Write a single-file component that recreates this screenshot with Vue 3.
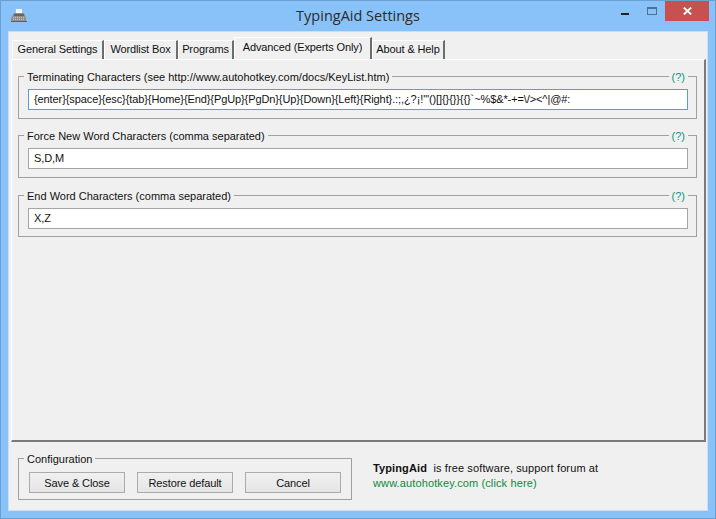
<script setup>
const tabs = [
  { label: 'General Settings', w: 92 },
  { label: 'Wordlist Box', w: 74 },
  { label: 'Programs', w: 56 },
  { label: 'Advanced (Experts Only)', w: 138, active: true },
  { label: 'About & Help', w: 73 },
]
const groups = [
  { title: 'Terminating Characters (see http://www.autohotkey.com/docs/KeyList.htm)', value: '{enter}{space}{esc}{tab}{Home}{End}{PgUp}{PgDn}{Up}{Down}{Left}{Right}.:;,¿?¡!\'"()[]{}{}}{{}`~%$&*-+=\\/><^|@#:', focus: true },
  { title: 'Force New Word Characters (comma separated)', value: 'S,D,M' },
  { title: 'End Word Characters (comma separated)', value: 'X,Z' },
]
</script>

<template>
  <div class="window">
    <header class="titlebar">
      <svg class="appicon" width="16" height="14" viewBox="0 0 16 14">
        <rect x="5" y="0" width="6" height="5" fill="#f4f4f4" />
        <path d="M3 4h10l2 5v4H0V9z" fill="#909090" />
        <rect x="3" y="5" width="10" height="2" fill="#666" />
        <path d="M2 8.5h12M2 10.5h12" stroke="#c4c4c4" stroke-width="1" stroke-dasharray="1 1" />
        <rect x="0" y="12" width="16" height="1" fill="#5f5f5f" />
      </svg>
      <h1 class="title">TypingAid Settings</h1>
      <div class="controls">
        <span class="min"></span>
        <span class="max"></span>
        <span class="close">
          <svg width="9" height="8" viewBox="0 0 9 8"><path d="M.8.5l7.4 7M8.2.5l-7.4 7" stroke="#fff" stroke-width="1.8" /></svg>
        </span>
      </div>
    </header>

    <main class="client">
      <nav class="tabs">
        <div v-for="t in tabs" :key="t.label" class="tab" :class="{ active: t.active }" :style="{ width: t.w + 'px' }">{{ t.label }}</div>
      </nav>
      <section class="panel">
        <div v-for="g in groups" :key="g.title" class="group">
          <span class="legend">{{ g.title }}</span>
          <span class="help">(<b>?</b>)</span>
          <div class="field" :class="{ focus: g.focus }">{{ g.value }}</div>
        </div>
      </section>
      <footer class="footer">
        <div class="config">
          <span class="legend">Configuration</span>
          <div class="buttons">
            <button class="btn">Save &amp; Close</button>
            <button class="btn">Restore default</button>
            <button class="btn">Cancel</button>
          </div>
        </div>
        <div class="about">
          <p><strong>TypingAid</strong>&nbsp; is free software, support forum at</p>
          <p class="link">www.autohotkey.com (click here)</p>
        </div>
      </footer>
    </main>
  </div>
</template>

<style scoped>
.window {
  width: 716px;
  height: 519px;
  box-sizing: border-box;
  background: #88c2f8;
  border: 1px solid #6a9fd0;
  display: flex;
  flex-direction: column;
  font-family: "Liberation Sans", Arial, sans-serif;
  font-size: 11px;
  color: #111;
}
.titlebar {
  height: 29px;
  flex: none;
  display: flex;
  align-items: flex-start;
  position: relative;
  padding-left: 10px;
}
.appicon { margin-top: 8px; }
.title {
  position: absolute;
  left: 0;
  right: 0;
  top: 5px;
  margin: 0;
  text-align: center;
  font-family: "Open Sans", sans-serif;
  font-size: 14.5px;
  font-weight: 400;
  color: #2c2c2c;
}
.controls {
  margin-left: auto;
  margin-right: 6px;
  display: flex;
}
.min {
  width: 8px;
  height: 2px;
  background: #222;
  margin-top: 12px;
  margin-right: 18px;
}
.max {
  width: 10px;
  height: 8px;
  box-sizing: border-box;
  border: 1px solid #4f7194;
  border-top-width: 2px;
  margin-top: 6px;
  margin-right: 8px;
}
.close {
  width: 44px;
  height: 20px;
  background: #c75050;
  display: flex;
  align-items: center;
  justify-content: center;
}
.client {
  flex: 1;
  margin: 1px 7px 7px 7px;
  background: #f0f0f0;
  border: 1px solid #c9dff3;
  display: flex;
  flex-direction: column;
  min-height: 0;
  padding: 5px 0 0 2px;
}
.tabs {
  display: flex;
  height: 22px;
  padding-left: 1px;
  align-items: flex-end;
}
.tab {
  height: 19px;
  box-sizing: border-box;
  padding-top: 1px;
  text-align: center;
  line-height: 15px;
  letter-spacing: -0.12px;
  background: #efefef;
  border-left: 1px solid #fff;
  border-top: 1px solid #fff;
  border-right: 2px solid #6d6d6d;
  white-space: nowrap;
}
.tab.active {
  height: 22px;
  padding-top: 2px;
  background: #f0f0f0;
}
.panel {
  height: 383px;
  width: 695px;
  flex: none;
  box-sizing: border-box;
  border-left: 1px solid #fff;
  border-top: 1px solid #fff;
  border-right: 2px solid #7a7a7a;
  border-bottom: 2px solid #7a7a7a;
  padding: 16px 7px 0 6px;
  display: flex;
  flex-direction: column;
}
.group {
  height: 43px;
  flex: none;
  box-sizing: border-box;
  padding: 12px 8px 0 9px;
  border: 1px solid #a0a0a0;
  position: relative;
}
.group + .group { margin-top: 16px; }
.group:last-child { margin-top: 17px; height: 42px; }
.legend {
  position: absolute;
  left: 5px;
  top: -6px;
  padding: 0 3px;
  line-height: 13px;
  background: #f0f0f0;
}
.help {
  position: absolute;
  right: 8px;
  top: -6px;
  padding: 0 3px;
  background: #f0f0f0;
  line-height: 13px;
  color: #0c9a68;
}
.help b { font-weight: 400; color: #1a8f9e; }
.field {
  height: 21px;
  box-sizing: border-box;
  background: #fff;
  border: 1px solid #a5a5a5;
  padding: 0 5px;
  line-height: 19px;
  letter-spacing: -0.1px;
  white-space: nowrap;
  overflow: hidden;
}
.field.focus { border-color: #5a9bd8; }
.footer {
  flex: 1;
  display: flex;
  align-items: flex-start;
  padding: 16px 0 0 7px;
}
.config {
  width: 334px;
  height: 42px;
  flex: none;
  box-sizing: border-box;
  padding: 13px 10px 0;
  border: 1px solid #a0a0a0;
  position: relative;
}
.buttons {
  display: flex;
  gap: 12px;
}
.btn {
  width: 96px;
  height: 21px;
  flex: none;
  box-sizing: border-box;
  padding: 0;
  border: 1px solid #ababab;
  background: linear-gradient(#f0f0f0, #e5e5e5);
  font: inherit;
  letter-spacing: -0.1px;
  color: #111;
}
.about {
  margin-left: 21px;
  padding-top: 3px;
  line-height: 15px;
  letter-spacing: 0.12px;
}
.about p { margin: 0; }
.about strong { font-weight: 700; }
.link { color: #0e8a3c; }
</style>
